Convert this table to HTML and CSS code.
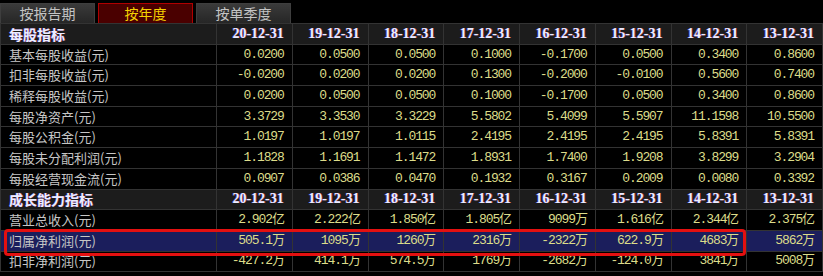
FILE: index.html
```html
<!DOCTYPE html>
<html lang="zh-CN">
<head>
  <meta charset="UTF-8">
  <title>财务指标</title>
  <link rel="stylesheet" href="styles.css">
</head>
<body>
  <div class="panel">
    <div class="tabs">
      <div class="tab">按报告期</div>
      <div class="tab active">按年度</div>
      <div class="tab">按单季度</div>
    </div>

    <div class="table-wrap">
      <table class="fin">
        <colgroup>
          <col class="c-label">
          <col><col><col><col><col><col><col><col>
        </colgroup>
        <tr class="head">
          <td class="label">每股指标</td>
          <td>20-12-31</td><td>19-12-31</td><td>18-12-31</td><td>17-12-31</td>
          <td>16-12-31</td><td>15-12-31</td><td>14-12-31</td><td>13-12-31</td>
        </tr>
        <tr>
          <td class="label">基本每股收益(元)</td>
          <td>0.0200</td><td>0.0500</td><td>0.0500</td><td>0.1000</td>
          <td>-0.1700</td><td>0.0500</td><td>0.3400</td><td>0.8600</td>
        </tr>
        <tr>
          <td class="label">扣非每股收益(元)</td>
          <td>-0.0200</td><td>0.0200</td><td>0.0200</td><td>0.1300</td>
          <td>-0.2000</td><td>-0.0100</td><td>0.5600</td><td>0.7400</td>
        </tr>
        <tr>
          <td class="label">稀释每股收益(元)</td>
          <td>0.0200</td><td>0.0500</td><td>0.0500</td><td>0.1000</td>
          <td>-0.1700</td><td>0.0500</td><td>0.3400</td><td>0.8600</td>
        </tr>
        <tr>
          <td class="label">每股净资产(元)</td>
          <td>3.3729</td><td>3.3530</td><td>3.3229</td><td>5.5802</td>
          <td>5.4099</td><td>5.5907</td><td>11.1598</td><td>10.5500</td>
        </tr>
        <tr>
          <td class="label">每股公积金(元)</td>
          <td>1.0197</td><td>1.0197</td><td>1.0115</td><td>2.4195</td>
          <td>2.4195</td><td>2.4195</td><td>5.8391</td><td>5.8391</td>
        </tr>
        <tr>
          <td class="label">每股未分配利润(元)</td>
          <td>1.1828</td><td>1.1691</td><td>1.1472</td><td>1.8931</td>
          <td>1.7400</td><td>1.9208</td><td>3.8299</td><td>3.2904</td>
        </tr>
        <tr>
          <td class="label">每股经营现金流(元)</td>
          <td>0.0907</td><td>0.0386</td><td>0.0470</td><td>0.1932</td>
          <td>0.3167</td><td>0.2009</td><td>0.0080</td><td>0.3392</td>
        </tr>
        <tr class="head">
          <td class="label">成长能力指标</td>
          <td>20-12-31</td><td>19-12-31</td><td>18-12-31</td><td>17-12-31</td>
          <td>16-12-31</td><td>15-12-31</td><td>14-12-31</td><td>13-12-31</td>
        </tr>
        <tr>
          <td class="label">营业总收入(元)</td>
          <td>2.902亿</td><td>2.222亿</td><td>1.850亿</td><td>1.805亿</td>
          <td>9099万</td><td>1.616亿</td><td>2.344亿</td><td>2.375亿</td>
        </tr>
        <tr class="picked">
          <td class="label">归属净利润(元)</td>
          <td>505.1万</td><td>1095万</td><td>1260万</td><td>2316万</td>
          <td>-2322万</td><td>622.9万</td><td>4683万</td><td>5862万</td>
        </tr>
        <tr>
          <td class="label">扣非净利润(元)</td>
          <td>-427.2万</td><td>414.1万</td><td>574.5万</td><td>1769万</td>
          <td>-2682万</td><td>-124.0万</td><td>3841万</td><td>5008万</td>
        </tr>
      </table>
      <div class="mark"></div>
    </div>
  </div>
</body>
</html>
```

FILE: styles.css
```css
body {
  margin: 0;
  background: #000;
  font-family: "Noto Sans CJK SC", "Noto Sans", sans-serif;
  overflow: hidden;
}
.panel {
  width: 823px;
  background: #000;
}
.tabs {
  display: flex;
  gap: 3px;
  padding-top: 3px;
  height: 20px;
}
.tab {
  width: 95px;
  box-sizing: border-box;
  background: linear-gradient(#3a3a3a, #262626);
  border: 1px solid #3e3e3e;
  border-bottom: none;
  color: #c4c4c4;
  font-size: 14px;
  line-height: 19px;
  text-align: center;
}
.tab.active {
  background: #4a0000;
  border-color: #b00000;
  color: #f5d200;
}

.table-wrap {
  position: relative;
}
.fin {
  width: 823px;
  table-layout: fixed;
  border-collapse: collapse;
}
.fin col.c-label {
  width: 216px;
}
.fin td {
  height: 19.7px;
  padding: 0 8px 0 0;
  border: 1px solid #333;
  text-align: right;
  font-family: "Liberation Mono", monospace;
  font-size: 13px;
  letter-spacing: -1.1px;
  color: #dcdc8a;
  white-space: nowrap;
  line-height: 18px;
}
.fin td.label {
  text-align: left;
  padding: 0 0 0 8px;
  font-family: "Noto Sans CJK SC", sans-serif;
  letter-spacing: 0;
  color: #c6c6c6;
}
.fin tr.head td {
  background: #1c1c1c;
  color: #ececff;
  font-family: "Liberation Serif", serif;
  font-weight: bold;
  font-size: 14px;
  letter-spacing: 0;
  text-shadow: -0.6px 0 rgba(90, 90, 255, 0.7), 0.6px 0 rgba(255, 70, 70, 0.6);
}
.fin tr.head td.label {
  font-family: "Noto Sans CJK SC", sans-serif;
}
.fin tr.picked td {
  background: #1b1e5c;
}

/* red box drawn over the 归属净利润 row */
.mark {
  position: absolute;
  left: 4px;
  top: 206px;
  width: 742px;
  height: 27px;
  box-sizing: border-box;
  border: 3px solid #e41010;
  border-radius: 4px;
}
```
